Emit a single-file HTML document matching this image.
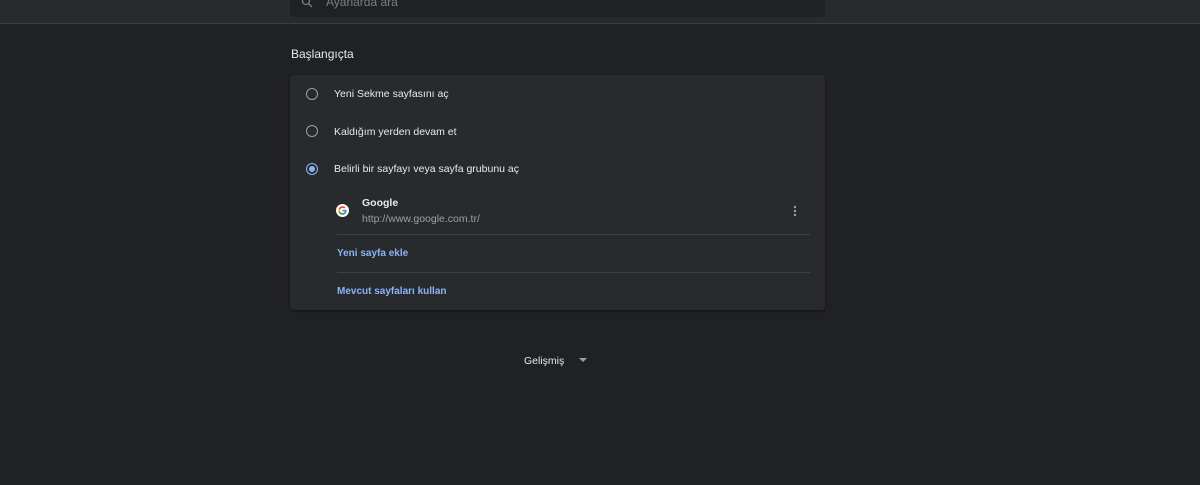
<!DOCTYPE html>
<html><head><style>
body{margin:0;width:1200px;height:485px;background:#202124;font-family:"Liberation Sans",sans-serif;position:relative;overflow:hidden;color:#e8eaed}
.top{position:absolute;left:0;top:0;width:1200px;height:23px;background:#292a2d;border-bottom:1px solid #3c3d40}
.search{position:absolute;left:290px;top:0;width:535px;height:17px;background:#202124;border-radius:0 0 3px 3px}
.search span{position:absolute;left:36px;top:-5px;font-size:12px;color:#7b7e83}
.title{position:absolute;left:291px;top:47px;font-size:12px;color:#e8eaed}
.card{position:absolute;left:290px;top:75px;width:535px;height:235px;background:#292a2d;border-radius:3px;box-shadow:0 1px 2px rgba(0,0,0,.5)}
.r{position:absolute;left:16px;width:10px;height:10px;border:1.5px solid #9aa0a6;border-radius:50%}
.r.on{border-color:#8ab4f8}
.r.on::after{content:"";position:absolute;left:2px;top:2px;width:6px;height:6px;border-radius:50%;background:#8ab4f8}
.t{position:absolute;left:44px;font-size:10.5px;color:#e8eaed}
.line{position:absolute;left:47px;width:473px;height:1px;background:#3f4043}
.link{position:absolute;left:47px;font-size:10px;color:#8ab4f8;font-weight:bold}
</style></head><body>
<div class="top"><div class="search">
<svg style="position:absolute;left:11px;top:-4px" width="12" height="12" viewBox="0 0 12 12"><circle cx="5" cy="5" r="3.5" fill="none" stroke="#7b7e83" stroke-width="1.3"/><path d="M7.5 7.5L11 11" stroke="#7b7e83" stroke-width="1.3"/></svg>
<span>Ayarlarda ara</span></div></div>
<div class="title">Başlangıçta</div>
<div class="card">
<div class="r" style="top:13px"></div><div class="t" style="top:13px">Yeni Sekme sayfasını aç</div>
<div class="r" style="top:50px"></div><div class="t" style="top:51px">Kaldığım yerden devam et</div>
<div class="r on" style="top:88px"></div><div class="t" style="top:88px">Belirli bir sayfayı veya sayfa grubunu aç</div>
<svg style="position:absolute;left:46px;top:129px" width="13" height="13" viewBox="0 0 24 24"><circle cx="12" cy="12" r="12" fill="#fff"/><path d="M19.6 12.2c0-.6-.1-1.1-.2-1.6H12v3h4.3a3.7 3.7 0 0 1-1.6 2.4v2h2.6c1.5-1.4 2.3-3.4 2.3-5.8z" fill="#4285f4"/><path d="M12 20c2.2 0 4-.7 5.3-2l-2.6-2a4.8 4.8 0 0 1-7.1-2.5H5v2A8 8 0 0 0 12 20z" fill="#34a853"/><path d="M7.6 13.5a4.8 4.8 0 0 1 0-3v-2H5a8 8 0 0 0 0 7z" fill="#fbbc05"/><path d="M12 7.2c1.2 0 2.3.4 3.2 1.2l2.3-2.3A8 8 0 0 0 5 8.5l2.6 2A4.8 4.8 0 0 1 12 7.2z" fill="#ea4335"/></svg>
<div class="t" style="left:72px;top:122px;font-weight:bold">Google</div>
<div class="t" style="left:72px;top:138px;color:#9aa0a6">http://www.google.com.tr/</div>
<svg style="position:absolute;left:503px;top:130px" width="4" height="12"><circle cx="2" cy="2" r="1.2" fill="#9aa0a6"/><circle cx="2" cy="6" r="1.2" fill="#9aa0a6"/><circle cx="2" cy="10" r="1.2" fill="#9aa0a6"/></svg>
<div class="line" style="top:159px"></div>
<div class="link" style="top:173px">Yeni sayfa ekle</div>
<div class="line" style="top:197px"></div>
<div class="link" style="top:211px">Mevcut sayfaları kullan</div>
</div>
<div style="position:absolute;left:524px;top:355px;font-size:10.5px">Gelişmiş</div>
<svg style="position:absolute;left:579px;top:358px" width="8" height="5"><path d="M0 0h8L4 4z" fill="#9aa0a6"/></svg>
</body></html>
